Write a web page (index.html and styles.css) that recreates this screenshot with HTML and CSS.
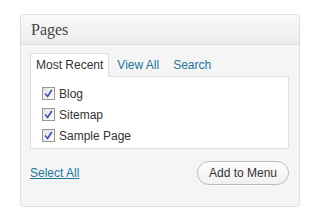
FILE: index.html
```html
<!DOCTYPE html>
<html lang="en">
<head>
    <meta charset="UTF-8">
    <title>Pages</title>
    <link rel="stylesheet" href="styles.css">
</head>
<body>
    <!-- Pages meta box -->
    <div class="postbox">
        <h3 class="postbox-title">Pages</h3>
        <div class="inside">
            <ul class="tabs">
                <li class="tab active">Most Recent</li>
                <li class="tab"><a href="#">View All</a></li>
                <li class="tab"><a href="#">Search</a></li>
            </ul>
            <div class="tabs-panel">
                <label class="item">
                    <span class="check">
                        <svg width="9" height="9" viewBox="0 0 9 9"><path d="M1.2 4.6 L3.6 7.4 L7.8 1" fill="none" stroke="#3552b8" stroke-width="1.6"/></svg>
                    </span>
                    Blog
                </label>
                <label class="item">
                    <span class="check">
                        <svg width="9" height="9" viewBox="0 0 9 9"><path d="M1.2 4.6 L3.6 7.4 L7.8 1" fill="none" stroke="#3552b8" stroke-width="1.6"/></svg>
                    </span>
                    Sitemap
                </label>
                <label class="item">
                    <span class="check">
                        <svg width="9" height="9" viewBox="0 0 9 9"><path d="M1.2 4.6 L3.6 7.4 L7.8 1" fill="none" stroke="#3552b8" stroke-width="1.6"/></svg>
                    </span>
                    Sample Page
                </label>
            </div>
            <div class="actions">
                <a href="#" class="select-all">Select All</a>
                <button class="button">Add to Menu</button>
            </div>
        </div>
    </div>
</body>
</html>
```

FILE: styles.css
```css
body {
    margin: 0;
    padding: 14px 0 0 20px;
    background-color: #fff;
    font-family: "Liberation Sans", Arial, sans-serif;
    font-size: 12px;
    color: #333;
}

/* Meta box */
.postbox {
    width: 278px;
    border: 1px solid #dfdfdf;
    border-radius: 3px;
    background-color: #f5f5f5;
}
.postbox-title {
    margin: 0;
    height: 29px;
    padding: 0 10px;
    border-bottom: 1px solid #dfdfdf;
    border-radius: 3px 3px 0 0;
    background: linear-gradient(to bottom, #f9f9f9, #ececec);
    font-family: "Liberation Serif", Georgia, serif;
    font-size: 16px;
    font-weight: normal;
    line-height: 29px;
    color: #464646;
}
.inside {
    padding: 8px 10px 21px 9px;
}

/* Tabs */
.tabs {
    list-style: none;
    margin: 0;
    padding: 0;
    display: flex;
    gap: 2px;
}
.tab {
    height: 22px;
    padding: 0 5px;
    border: 1px solid transparent;
    border-bottom: none;
    line-height: 22px;
}
.tab.active {
    border-color: #dfdfdf;
    background-color: #fff;
    border-radius: 3px 3px 0 0;
    margin-bottom: -1px;
    height: 23px;
    position: relative;
}
.tab a {
    color: #21759b;
    text-decoration: none;
}

.tabs-panel {
    border: 1px solid #dfdfdf;
    background-color: #fff;
    padding: 6px 11px 2px;
}
.item {
    display: flex;
    align-items: center;
    gap: 4px;
    height: 21px;
    color: #333;
}
.check {
    width: 11px;
    height: 11px;
    border: 1px solid #979797;
    background: linear-gradient(135deg, #e2e2e2, #fdfdfd);
    display: flex;
    align-items: center;
    justify-content: center;
}

/* Bottom row */
.actions {
    margin-top: 12px;
    display: flex;
    justify-content: space-between;
    align-items: center;
}
.select-all {
    color: #21759b;
    text-decoration: underline;
}
.button {
    height: 24px;
    padding: 0 11px;
    border: 1px solid #bbb;
    border-radius: 12px;
    background: linear-gradient(to bottom, #fefefe, #f0f0f0);
    font-family: "Liberation Sans", Arial, sans-serif;
    font-size: 12px;
    color: #333;
}
```
